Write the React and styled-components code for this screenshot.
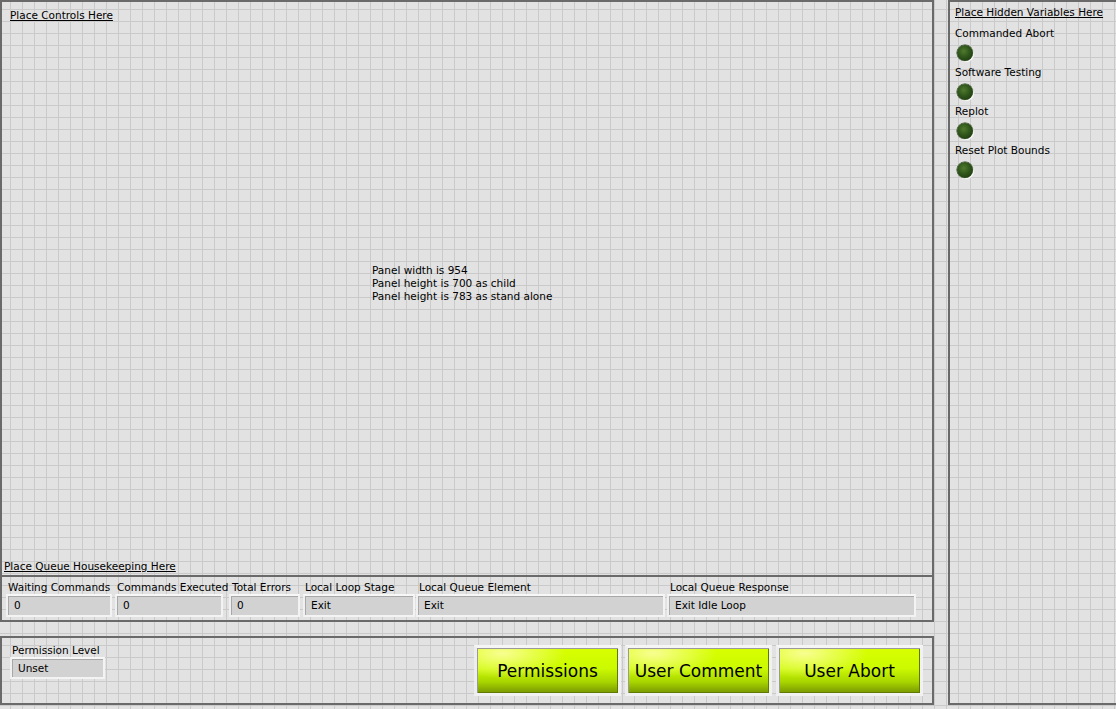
import React from "react";
import styled, { createGlobalStyle } from "styled-components";

const BG = "#e2e2e2";
const GRID = "#cacaca";
const FRAME = "#6a6a6a";
const FONT = `"DejaVu Sans", "Liberation Sans", sans-serif`;

const GlobalStyle = createGlobalStyle`
  html, body {
    margin: 0;
    padding: 0;
    background: ${BG};
  }
  body {
    font-family: ${FONT};
    font-size: 10.5px;
    color: #000;
  }
`;

const Screen = styled.div`
  width: 1116px;
  height: 709px;
  overflow: hidden;
  display: flex;
  align-items: flex-start;
  background-color: ${BG};
  background-image: linear-gradient(to right, ${GRID} 1px, transparent 1px),
    linear-gradient(to bottom, ${GRID} 1px, transparent 1px);
  background-size: 12px 12px;
  background-position: 10px 9px;
`;

const LeftColumn = styled.div`
  width: 934px;
  display: flex;
  flex-direction: column;
`;

const ControlsPanel = styled.div`
  height: 575px;
  box-sizing: border-box;
  border: 2px solid ${FRAME};
  border-bottom: none;
  display: flex;
  flex-direction: column;
  padding: 7px 0 2px 0;
`;

const Heading = styled.div`
  line-height: 13px;
  text-decoration: underline;
  white-space: nowrap;
  padding-left: ${(p) => p.$indent}px;
  margin-top: ${(p) => (p.$bottom ? "auto" : "0")};
`;

const Note = styled.div`
  line-height: 13px;
  margin: 242px 0 0 370px;
  white-space: nowrap;
`;

const QueueBox = styled.div`
  height: 47px;
  box-sizing: border-box;
  border: 2px solid ${FRAME};
  display: flex;
  padding: 4px 0 0 4px;
`;

const FieldGroup = styled.div`
  width: ${(p) => p.$w}px;
  margin-left: ${(p) => p.$gap || 0}px;
  display: flex;
  flex-direction: column;
  flex-shrink: 0;
`;

const Label = styled.div`
  line-height: 13px;
  padding-left: ${(p) => p.$pad ?? 2}px;
  white-space: nowrap;
`;

const Field = styled.div`
  height: ${(p) => p.$h || 23}px;
  box-sizing: border-box;
  border: 2px solid #f3f3f3;
  border-top-color: #f7f7f7;
  border-left-color: #f0f0f0;
  background: #d2d2d2;
  box-shadow: inset 1px 1px 0 #a8a8a8;
  line-height: ${(p) => (p.$h || 23) - 4}px;
  padding-left: 6px;
  white-space: nowrap;
`;

const PermissionPanel = styled.div`
  margin-top: 14px;
  height: 69px;
  box-sizing: border-box;
  border: 2px solid ${FRAME};
  display: flex;
  align-items: flex-start;
  padding: 6px 9px 0 8px;
`;

const PermissionGroup = styled.div`
  width: 95px;
  display: flex;
  flex-direction: column;
`;

const ButtonRow = styled.div`
  margin-left: auto;
  margin-top: 1px;
  display: flex;
  gap: 4px;
`;

const YellowButton = styled.button`
  width: ${(p) => p.$w}px;
  flex-shrink: 0;
  height: 51px;
  box-sizing: border-box;
  border: 3px solid #f1f1f1;
  border-top-color: #f5f5f5;
  border-left-color: #ededed;
  padding: 0;
  font-family: ${FONT};
  font-size: 17px;
  color: #000;
  cursor: pointer;
  background: radial-gradient(
      ellipse 45% 55% at 18% 12%,
      rgba(255, 255, 170, 0.85) 0%,
      rgba(255, 255, 120, 0) 100%
    ),
    linear-gradient(to bottom, #d8ff00 0%, #ccfa00 45%, #a9d600 75%, #789800 100%);
  box-shadow: inset 1px 1px 0 #9a9a9a, inset -1px -1px 0 #5f7a00;
`;

const HiddenPanel = styled.div`
  margin-left: 14px;
  flex: 1;
  height: 705px;
  box-sizing: border-box;
  border: 2px solid ${FRAME};
  border-right: none;
  padding: 4px 0 0 5px;
  display: flex;
  flex-direction: column;
`;

const HiddenList = styled.div`
  margin-top: 8px;
  display: flex;
  flex-direction: column;
`;

const HiddenItem = styled.div`
  display: flex;
  flex-direction: column;
  align-items: flex-start;
`;

const Led = styled.div`
  width: 16px;
  height: 16px;
  margin: 5px 0 5px 2px;
  border-radius: 50%;
  background: radial-gradient(
    circle at 42% 38%,
    #4f7a2e 0%,
    #2f551a 45%,
    #16300a 100%
  );
  box-shadow: 1px 1px 1px #ffffff, 0 0 0 0.5px #1f2f12;
`;

const queueFields = [
  { label: "Waiting Commands", value: "0", w: 106, gap: 0 },
  { label: "Commands Executed", value: "0", w: 108, gap: 3 },
  { label: "Total Errors", value: "0", w: 71, gap: 6, pad: 3 },
  { label: "Local Loop Stage", value: "Exit", w: 112, gap: 3 },
  { label: "Local Queue Element", value: "Exit", w: 249, gap: 1, pad: 3 },
  { label: "Local Queue Response", value: "Exit Idle Loop", w: 249, gap: 2, pad: 3 },
];

const hiddenVars = [
  "Commanded Abort",
  "Software Testing",
  "Replot",
  "Reset Plot Bounds",
];

const buttons = [
  { label: "Permissions", w: 147 },
  { label: "User Comment", w: 147 },
  { label: "User Abort", w: 147 },
];

const App = () => {
  return (
    <>
      <GlobalStyle />
      <Screen>
        <LeftColumn>
          <ControlsPanel>
            <Heading $indent={8}>Place Controls Here</Heading>
            <Note>
              Panel width is 954
              <br />
              Panel height is 700 as child
              <br />
              Panel height is 783 as stand alone
            </Note>
            <Heading $indent={2} $bottom>
              Place Queue Housekeeping Here
            </Heading>
          </ControlsPanel>

          <QueueBox>
            {queueFields.map((f) => (
              <FieldGroup key={f.label} $w={f.w} $gap={f.gap}>
                <Label $pad={f.pad}>{f.label}</Label>
                <Field>{f.value}</Field>
              </FieldGroup>
            ))}
          </QueueBox>

          <PermissionPanel>
            <PermissionGroup>
              <Label $pad={2}>Permission Level</Label>
              <Field $h={22}>Unset</Field>
            </PermissionGroup>
            <ButtonRow>
              {buttons.map((b) => (
                <YellowButton key={b.label} $w={b.w}>
                  {b.label}
                </YellowButton>
              ))}
            </ButtonRow>
          </PermissionPanel>
        </LeftColumn>

        <HiddenPanel>
          <Heading $indent={0}>Place Hidden Variables Here</Heading>
          <HiddenList>
            {hiddenVars.map((name) => (
              <HiddenItem key={name}>
                <Label $pad={0}>{name}</Label>
                <Led />
              </HiddenItem>
            ))}
          </HiddenList>
        </HiddenPanel>
      </Screen>
    </>
  );
};

export default App;
